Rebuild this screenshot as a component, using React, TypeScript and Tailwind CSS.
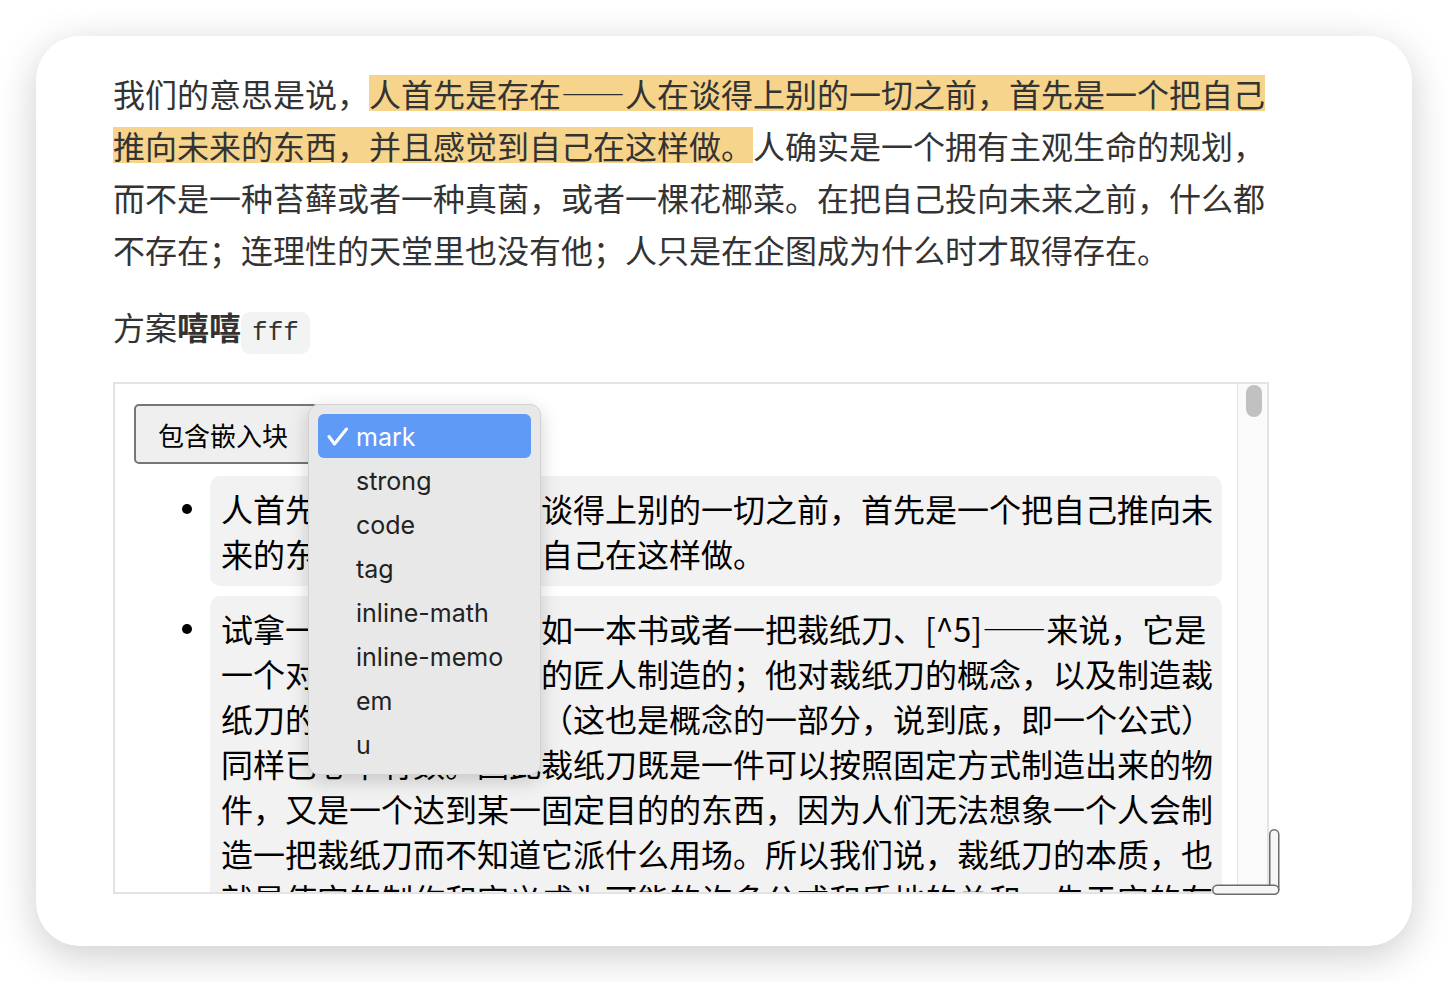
import React from "react";

const options = ["mark", "strong", "code", "tag", "inline-math", "inline-memo", "em", "u"];

// em dashes set full width, like the reference's CJK font
const Dash = () => <span className="[font-feature-settings:'fwid']">——</span>;

const CheckMark = () => (
  <svg width="22" height="20" viewBox="0 0 22 20" fill="none">
    <path d="M2 9.5 L7.5 17 L19.5 2" stroke="white" strokeWidth="3" strokeLinecap="round" strokeLinejoin="round" />
  </svg>
);

const ResizeHandle = () => (
  <svg width="72" height="70" viewBox="0 0 72 70" fill="none">
    <rect x="59.75" y="2.75" width="9" height="64" rx="4.5" fill="#f6f6f6" stroke="#6b6b6b" strokeWidth="1.5" />
    <rect x="2.75" y="58.25" width="66" height="9" rx="4.5" fill="#f6f6f6" stroke="#6b6b6b" strokeWidth="1.5" />
  </svg>
);

const Dropdown = () => (
  <div className="absolute left-[193px] top-[20px] w-[233px] h-[371px] rounded-[11px] border border-[#d2d2d2] bg-[#e8e8e8] p-[9px] shadow-[0_6px_20px_rgba(0,0,0,0.18)] font-['Inter',sans-serif] text-[25px]">
    {options.map((opt, i) => (
      <div
        key={opt}
        className={
          i === 0
            ? "flex h-[44px] items-center rounded-[6px] bg-[#5e9af6] pt-[2px] text-white"
            : "flex h-[44px] items-center pt-[2px] text-[#222]"
        }
      >
        <span className="flex w-[38px] justify-center pl-[2px]">{i === 0 && <CheckMark />}</span>
        <span className="leading-none">{opt}</span>
      </div>
    ))}
  </div>
);

const ListBox = ({ children }: { children: React.ReactNode }) => (
  <li className="flex">
    <span className="flex w-[76px] shrink-0 justify-end pr-[18px] pt-[28px]">
      <span className="h-[10px] w-[10px] rounded-full bg-black" />
    </span>
    <div className="w-[1012px] shrink-0 rounded-[10px] bg-[#f2f2f2] py-[10px] pl-[11px] pr-[2px] text-[32px] leading-[45px] text-black">
      {children}
    </div>
  </li>
);

export default function App() {
  return (
    <div className="h-[982px] overflow-hidden bg-white p-[36px]">
      <div className="h-[910px] rounded-[44px] bg-white pl-[77px] pt-[31px] shadow-[0_10px_40px_rgba(0,0,0,0.2)] font-['Noto_Sans_CJK_SC',sans-serif] text-[#333]">
        <p className="w-[1156px] text-[32px] leading-[52px]">
          我们的意思是说，
          <span className="bg-[linear-gradient(to_bottom,transparent_11%,#f6d48b_11%,#f6d48b_89%,transparent_89%)]">
            人首先是存在<Dash />人在谈得上别的一切之前，首先是一个把自己推向未来的东西，并且感觉到自己在这样做。
          </span>
          人确实是一个拥有主观生命的规划，而不是一种苔藓或者一种真菌，或者一棵花椰菜。在把自己投向未来之前，什么都不存在；连理性的天堂里也没有他；人只是在企图成为什么时才取得存在。
        </p>
        <p className="mt-[25px] text-[32px] leading-[52px]">
          方案<strong className="font-bold">嘻嘻</strong>
          <code className="rounded-[9px] bg-[#f2f3f3] px-[11px] py-[6px] font-['Liberation_Mono',monospace] text-[26px] text-[#333]">fff</code>
        </p>

        <div className="relative mt-[23px] flex h-[512px] w-[1156px] border-2 border-[#e3e3e3]">
          <div className="flex-1 overflow-hidden pl-[19px] pt-[20px]">
            <button className="h-[60px] w-[184px] rounded-[5px] border-2 border-[#767676] bg-[#efefef] pl-[22px] pr-[10px] text-left text-[26px] text-black">
              包含嵌入块
            </button>
            <ul className="mt-[12px] flex flex-col gap-[10px]">
              <ListBox>
                人首先是存在<Dash />人在谈得上别的一切之前，首先是一个把自己推向未来的东西，并且感觉到自己在这样做。
              </ListBox>
              <ListBox>
                试拿一件工艺品<Dash />例如一本书或者一把裁纸刀、[^5]<Dash />来说，它是一个对此已有一个概念的匠人制造的；他对裁纸刀的概念，以及制造裁纸刀的此前已有的工艺（这也是概念的一部分，说到底，即一个公式）同样已心中有数。因此裁纸刀既是一件可以按照固定方式制造出来的物件，又是一个达到某一固定目的的东西，因为人们无法想象一个人会制造一把裁纸刀而不知道它派什么用场。所以我们说，裁纸刀的本质，也就是使它的制作和定义成为可能的许多公式和质地的总和，先于它的存在。
              </ListBox>
            </ul>
          </div>
          <div className="w-[30px] shrink-0 border-l border-[#e6e6e6] bg-[#fafafa] pl-[8px] pt-[1px]">
            <div className="h-[32px] w-[16px] rounded-full bg-[#c1c1c1]" />
          </div>
          <Dropdown />
          <div className="absolute left-[1095px] top-[443px]">
            <ResizeHandle />
          </div>
        </div>
      </div>
    </div>
  );
}
